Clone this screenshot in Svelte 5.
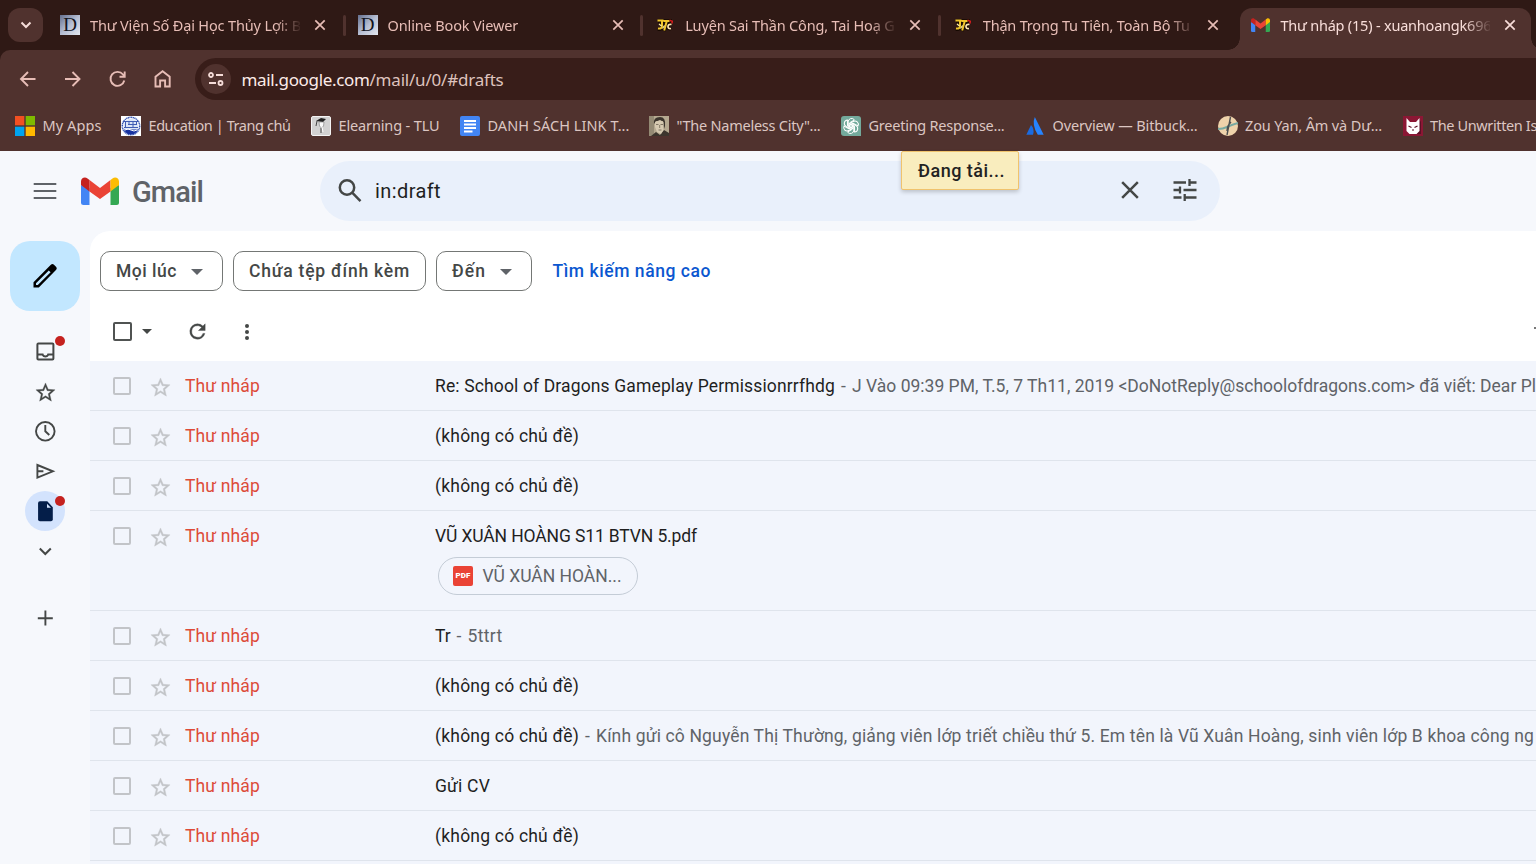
<script>
  // Spreads letter spacing so that a label takes exactly the given width.
  function fit(node, width) {
    if (!width) return;
    node.style.letterSpacing = '0px';
    const natural = node.getBoundingClientRect().width;
    const count = node.textContent.length;
    node.style.letterSpacing = (width - natural) / count + 'px';
  }

  const tabs = [
    { icon: 'd', title: 'Thư Viện Số Đại Học Thủy Lợi: B', w: 211 },
    { icon: 'd', title: 'Online Book Viewer', w: 130.5 },
    { icon: 'jtc', title: 'Luyện Sai Thần Công, Tai Hoạ G', w: 209.5 },
    { icon: 'jtc', title: 'Thận Trọng Tu Tiên, Toàn Bộ Tu', w: 207 },
    { icon: 'gmail', title: 'Thư nháp (15) - xuanhoangk696', w: 211, active: true }
  ];

  const bookmarks = [
    { icon: 'ms', label: 'My Apps', w: 59 },
    { icon: 'tlu', label: 'Education | Trang chủ', w: 142 },
    { icon: 'elearn', label: 'Elearning - TLU', w: 101 },
    { icon: 'docs', label: 'DANH SÁCH LINK T...', w: 142 },
    { icon: 'face', label: '"The Nameless City"...', w: 144 },
    { icon: 'gpt', label: 'Greeting Response...', w: 136 },
    { icon: 'atl', label: 'Overview — Bitbuck...', w: 145 },
    { icon: 'zou', label: 'Zou Yan, Âm và Dư...', w: 137 },
    { icon: 'cat', label: 'The Unwritten Is', w: 107 }
  ];

  const none = { subject: '(không có chủ đề)', w: 144 };
  const mails = [
    {
      subject: 'Re: School of Dragons Gameplay Permissionrrfhdg', w: 400,
      snippet: 'J Vào 09:39 PM, T.5, 7 Th11, 2019 <DoNotReply@schoolofdragons.com> đã viết: Dear Pl', sw: 684
    },
    none,
    none,
    { subject: 'VŨ XUÂN HOÀNG S11 BTVN 5.pdf', w: 262, file: 'VŨ XUÂN HOÀN...' },
    { subject: 'Tr', w: 15.5, snippet: '5ttrt', sw: 35 },
    none,
    {
      ...none,
      snippet: 'Kính gửi cô Nguyễn Thị Thường, giảng viên lớp triết chiều thứ 5. Em tên là Vũ Xuân Hoàng, sinh viên lớp B khoa công ng', sw: 938
    },
    { subject: 'Gửi CV', w: 55 },
    none
  ];

  const star = 'M22 9.24l-7.19-.62L12 2 9.19 8.63 2 9.24l5.46 4.73L5.82 21 12 17.27 18.18 21l-1.63-7.03L22 9.24zM12 15.4l-3.76 2.27 1-4.28-3.32-2.88 4.38-.38L12 6.1l1.71 4.04 4.38.38-3.32 2.88 1 4.28L12 15.4z';
  const refresh = 'M17.65 6.35A7.96 7.96 0 0 0 12 4a8 8 0 1 0 7.73 10h-2.08A6 6 0 1 1 12 6c1.66 0 3.14.69 4.22 1.78L13 11h7V4l-2.35 2.35z';
</script>

{#snippet gmailMark(w, h)}
  <svg width={w} height={h} viewBox="0 0 38 28">
    <path fill="#4285f4" d="M0 8v17.500Q0 28 2.500 28H8.500V11z" />
    <path fill="#34a853" d="M29.500 28h6Q38 28 38 25.500V8l-8.500 3z" />
    <path fill="#ea4335" d="M8.500 14.500V3L19 11 29.500 3v11.500L19 22z" />
    <path fill="#fbbc04" d="M29.500 14.500V3l2-1.600C34.200-.8 38 1 38 4.400V8z" />
    <path fill="#c5221f" d="M8.500 14.500V3l-2-1.600C3.800-.8 0 1 0 4.400V8z" />
  </svg>
{/snippet}

{#snippet close(size, stroke)}
  <svg width={size} height={size} viewBox="0 0 12 12"><path d="M1.300 1.300l9.400 9.400M10.700 1.300l-9.400 9.400" fill="none" stroke="currentColor" stroke-width={stroke} /></svg>
{/snippet}

{#snippet favicon(kind)}
  {#if kind === 'd'}
    <span class="fav-d">D</span>
  {:else if kind === 'jtc'}
    <svg width="16" height="14" viewBox="0 0 16 14" fill="none">
      <path d="M1 3h14M5 3v6q-1 3-4 2M10 3L7 13M14 6q-4 1-3 4l3 1" stroke="#160900" stroke-width="3.500" />
      <path d="M.5 2.500h6M5 3v5q0 3-4 2.500M6.500 3h6M9.800 3L7.200 12.500" stroke="#f0c52c" stroke-width="2" />
      <path d="M2 6l2.500 2M5.500 10.500l2-3" stroke="#fff3a8" stroke-width="1.200" />
      <path d="M14.500 6.500q-3.500-.5-3.500 2t3 2" stroke="#ffe6b4" stroke-width="1.700" />
      <path d="M12.500 2.200l2.800 1-.4 2.300" stroke="#d91d1d" stroke-width="1.500" />
    </svg>
  {:else if kind === 'gmail'}
    {@render gmailMark(19, 14)}
  {:else if kind === 'ms'}
    <svg width="20" height="20" viewBox="0 0 20 20"><path fill="#f25022" d="M0 0h9.300v9.300H0z" /><path fill="#7fba00" d="M10.700 0H20v9.300h-9.300z" /><path fill="#00a4ef" d="M0 10.700h9.300V20H0z" /><path fill="#ffb900" d="M10.700 10.700H20V20h-9.300z" /></svg>
  {:else if kind === 'tlu'}
    <svg width="20" height="20" viewBox="0 0 20 20" fill="none">
      <path fill="#fff" d="M0 0h20v20H0z" />
      <circle cx="10" cy="10" r="8.700" stroke="#3556b5" stroke-width="1.500" stroke-dasharray="1.200 .5" />
      <circle cx="10" cy="10" r="7.300" fill="#dbe5f7" />
      <path d="M3 13.500h14q-2 5-7 5t-7-5z" fill="#1732a0" />
      <path d="M2 5.500h15M3 11.500h14M4.500 6v5M7 8.500h8M8 6v3M12 6v5M15.500 6v3" stroke="#3f5cb4" />
      <path d="M4 14q3-2 6 0t6 0" stroke="#fff" />
    </svg>
  {:else if kind === 'elearn'}
    <svg width="20" height="20" viewBox="0 0 20 20" fill="none">
      <rect x=".5" y=".5" width="19" height="19" rx="1.500" fill="#d2d2d2" stroke="#f4f4f4" />
      <path d="M5 5l5-3 5 1-3 3z" fill="#222" />
      <path d="M8 6h5l-.5 4-2 2-2-2z" fill="#fafafa" stroke="#777" stroke-width=".6" />
      <path d="M6 5l-1 5M10 12v5" stroke="#444" />
      <path d="M11 11l1 5" stroke="#fff" />
    </svg>
  {:else if kind === 'docs'}
    <svg width="20" height="20" viewBox="0 0 20 20"><rect width="20" height="20" rx="2" fill="#4285f4" /><path d="M4 5h12M4 8.500h12M4 12h12M4 15.500h8.500" stroke="#fff" stroke-width="1.800" /></svg>
  {:else if kind === 'face'}
    <svg width="20" height="20" viewBox="0 0 20 20">
      <path fill="#b5a990" d="M0 0h20v20H0z" /><path fill="#948a74" d="M0 0h5v20H0z" />
      <path fill="#3c352d" d="M2 20l5-4 4 3 4-5 5 3v3zM5 8q-1-7 6-7 6 0 5 9l-1 3-1-8-7 0z" />
      <path fill="#d6cab1" d="M6 6l5-2 3.500 2v8l-2.500 4-4-2-2-5z" />
      <path d="M7 8.500h2.500M11.500 8.500H14M9.500 14h3M10.700 9v3" stroke="#6d6352" stroke-width=".8" />
    </svg>
  {:else if kind === 'gpt'}
    <svg width="20" height="20" viewBox="0 0 20 20" fill="none">
      <path d="M3 0h14q3 0 3 3v17H3q-3 0-3-3V3q0-3 3-3z" fill="#74aa9c" />
      <g stroke="#fff" stroke-width="1">
        {#each [0, 60, 120, 180, 240, 300] as a}
          <path transform="rotate({a} 10 10)" d="M7.200 11.600V5.900a3.400 3.400 0 0 1 6.200-2L8.800 6.700v5.200" />
        {/each}
      </g>
    </svg>
  {:else if kind === 'atl'}
    <svg width="20" height="20" viewBox="0 0 20 20"><path fill="#2684ff" d="M9.800 1L18.700 18.700h-5.900Q6.500 9 9.800 1z" /><path fill="#1b6be0" d="M6 9q4 4 2 9.700H1.300z" /></svg>
  {:else if kind === 'zou'}
    <svg width="20" height="20" viewBox="0 0 20 20" fill="none">
      <circle cx="10" cy="10" r="10" fill="#efd3ab" />
      <path d="M0 13q5 0 9-2t11-4" stroke="#79aaa1" stroke-width="2" />
      <path d="M12.500 1L9 19M13 6q-4 4-4 9" stroke="#4c4f50" stroke-width="1.400" />
    </svg>
  {:else if kind === 'cat'}
    <svg width="20" height="20" viewBox="0 0 20 20"><path fill="#8b1734" d="M0 0h20v20H0z" /><path fill="#5c0f26" d="M16 3l2 3v12H7l-3-3z" /><path fill="#fff" d="M3.500 2l3.500 4h6l3.500-4v13l-3 3h-7l-3-3z" /><path d="M5.500 10l3 1.500M14.500 10l-3 1.500M9 14h2" stroke="#5b0d22" stroke-width="1.200" /></svg>
  {/if}
{/snippet}

<div class="window">
  <header class="chrome">
    <div class="strip">
      <button class="search-tabs" aria-label="Tabs">
        <svg width="12" height="8" viewBox="0 0 12 8"><path d="M1.500 1.500L6 6l4.500-4.500" fill="none" stroke="currentColor" stroke-width="2" /></svg>
      </button>
      <div class="tabs">
        {#each tabs as t, i}
          <div class="tab" class:active={t.active}>
            <span class="fav">{@render favicon(t.icon)}</span>
            <span class="title"><span use:fit={t.w}>{t.title}</span></span>
            <span class="x">{@render close(12, 1.7)}</span>
            {#if i < 3}<i class="sep"></i>{/if}
          </div>
        {/each}
      </div>
    </div>

    <div class="toolbar">
      <div class="nav">
        <svg width="20" height="20" viewBox="0 0 20 20"><path d="M17.500 10H3.500M10 3L3 10l7 7" /></svg>
        <svg width="20" height="20" viewBox="0 0 20 20"><path d="M2 10h14M9.500 3l7 7-7 7" /></svg>
        <svg width="20" height="20" viewBox="0 0 20 20"><path d="M16.300 11.500A7 7 0 1 1 15 5.500L16.500 7.500M16.700 2.500v5.200H11.500" /></svg>
        <svg width="20" height="20" viewBox="0 0 20 20"><path d="M2.500 17.500V7.800L9.600 2.200l7.100 5.600v9.700h-4.600v-6H7.100v6z" /></svg>
      </div>
      <div class="omnibox">
        <span class="site">
          <svg width="18" height="14" viewBox="0 0 18 14" fill="none" stroke="currentColor" stroke-width="1.800"><circle cx="4" cy="3" r="2" /><path d="M9 3h7M2 11h7" /><circle cx="13.500" cy="11" r="2" /></svg>
        </span>
        <span class="url"><b use:fit={128}>mail.google.com</b><span use:fit={134}>/mail/u/0/#drafts</span></span>
      </div>
    </div>

    <nav class="bookmarks">
      {#each bookmarks as b}
        <div class="bookmark">
          <span class="fav">{@render favicon(b.icon)}</span>
          <span class="blabel"><span use:fit={b.w}>{b.label}</span></span>
        </div>
      {/each}
    </nav>
  </header>

  <div class="gmail">
    <div class="top">
      <svg class="burger" width="24" height="18" viewBox="0 0 24 18"><path d="M.7 2h22.600M.7 9h22.600M.7 16h22.600" stroke="#5f6368" stroke-width="2.200" /></svg>
      {@render gmailMark(38, 28)}
      <span class="brand"><span use:fit={71}>Gmail</span></span>
      <div class="search">
        <svg width="24" height="24" viewBox="0 0 24 24" fill="none" stroke="currentColor" stroke-width="2.500"><circle cx="9" cy="8.500" r="7.200" /><path d="M14.200 13.700l8.300 8.500" /></svg>
        <span class="query"><span use:fit={66}>in:draft</span></span>
        <span class="clear">{@render close(20, 1.5)}</span>
        <svg class="tune" width="26" height="26" viewBox="0 0 26 26" fill="none" stroke="currentColor" stroke-width="2.300"><path d="M1.500 5.500H14M17.500 5.500H24.500M17.500 2v7M1.500 13h6M8 9.500v7M11.500 13h13M1.500 20.500h8M12.700 17v7M12.700 20.500h11.800" /></svg>
      </div>
      <div class="toast"><span use:fit={87}>Đang tải...</span></div>
    </div>

    <div class="body">
      <aside>
        <button class="compose" aria-label="Compose">
          <svg width="26" height="26" viewBox="0 0 26 26"><path fill="#000" fill-rule="evenodd" d="M1.500 19.200L17.600 3.100l1.500-1.500q1.300-1 2.600 0l2.500 2.500q1.200 1.300 0 2.600L6.800 24.500H1.500zM4 20.200V22h1.800L18.600 9.200l-1.800-1.800z" /></svg>
        </button>
        <div class="side">
          <span class="slot"><svg width="24" height="24" viewBox="-.4 -.4 24 24"><path fill="currentColor" d="M19 3H5a2 2 0 0 0-2 2v14c0 1.100.9 2 2 2h14a2 2 0 0 0 2-2V5a2 2 0 0 0-2-2zm0 16H5v-3h3.560c.69 1.190 1.970 2 3.450 2s2.750-.81 3.450-2H19v3zm0-5h-4.990c0 1.100-.9 2-2 2s-2-.9-2-2H5V5h14v9z" /></svg><i class="dot"></i></span>
          <span class="slot"><svg class="nudge" width="23" height="23" viewBox="0 0 24 24"><path fill="currentColor" stroke="currentColor" stroke-width=".3" d={star} /></svg></span>
          <span class="slot"><svg width="24" height="24" viewBox="0 0 24 24" fill="none" stroke="currentColor" stroke-width="1.900"><circle cx="12.300" cy="12.300" r="9.300" /><path d="M12.300 6v6.300l4 3.700" /></svg></span>
          <span class="slot"><svg width="24" height="24" viewBox="0 0 24 24" fill="none" stroke="currentColor" stroke-width="1.900"><path d="M4.400 6l15.500 6.300-15.500 6.300zM4.400 12.300h6" /></svg></span>
          <span class="slot current"><svg width="24" height="24" viewBox="0 0 24 24"><path fill="#041e49" d="M6 2h8l6 6v12q0 2-2 2H6q-2 0-2-2V4q0-2 2-2z" transform="translate(1.400 .3) scale(.92 1)" /><path fill="#d3e3fd" d="M14 4.800V8.800h4z" /></svg><i class="dot"></i></span>
          <span class="slot"><svg width="14" height="9" viewBox="0 0 14 9"><path d="M1.800 1.500L7.300 7l5.500-5.500" fill="none" stroke="currentColor" stroke-width="2" /></svg></span>
          <span class="slot plus"><svg width="16" height="16" viewBox="0 0 16 16"><path d="M8.400 .5v15M.8 8.300h15" stroke="currentColor" stroke-width="1.900" /></svg></span>
        </div>
      </aside>

      <main>
        <div class="chips">
          <span class="chip"><span use:fit={61}>Mọi lúc</span><i class="caret"></i></span>
          <span class="chip"><span use:fit={161}>Chứa tệp đính kèm</span></span>
          <span class="chip"><span use:fit={34}>Đến</span><i class="caret"></i></span>
          <span class="advanced"><span use:fit={158.5}>Tìm kiếm nâng cao</span></span>
        </div>
        <div class="actions">
          <i class="check dark"></i>
          <i class="caret small"></i>
          <svg class="reload" width="23" height="23" viewBox="0 0 24 24"><path fill="currentColor" stroke="currentColor" stroke-width=".4" d={refresh} /></svg>
          <svg class="more" width="6" height="18" viewBox="0 0 6 18"><g fill="currentColor"><circle cx="3" cy="3" r="2" /><circle cx="3" cy="9" r="2" /><circle cx="3" cy="15" r="2" /></g></svg>
          <i class="page-arrow"></i>
        </div>
        <div class="rows">
          {#each mails as m}
            <div class="row" class:tall={m.file}>
              <i class="check"></i>
              <svg class="star" width="23" height="23" viewBox="0 0 24 24"><path fill="currentColor" stroke="currentColor" stroke-width=".4" d={star} /></svg>
              <span class="from"><span use:fit={75}>Thư nháp</span></span>
              <div class="content">
                <div class="line">
                  <span class="subject" use:fit={m.w}>{m.subject}</span>
                  {#if m.snippet}
                    <span class="dash">-</span>
                    <span class="snippet" use:fit={m.sw}>{m.snippet}</span>
                  {/if}
                </div>
                {#if m.file}
                  <div class="file"><span class="pdf">PDF</span><span use:fit={139}>{m.file}</span></div>
                {/if}
              </div>
            </div>
          {/each}
          <div class="row"></div>
        </div>
      </main>
    </div>
  </div>
</div>

<style>
  :global(body) { margin: 0; overflow: hidden; }
  * { box-sizing: border-box; }
  svg { display: block; flex: none; }
  i { display: block; flex: none; }
  button { border: 0; padding: 0; display: flex; align-items: center; justify-content: center; flex: none; }
  span, b { white-space: pre; }
  .window { width: 1536px; height: 864px; overflow: hidden; display: flex; flex-direction: column; background: #f6f8fc; }

  .chrome { height: 151px; flex: none; background: #2f1915; color: #e7bdb6; font-family: "Noto Sans", "Open Sans", sans-serif; }
  .strip { height: 50px; display: flex; padding-left: 8px; }
  .search-tabs { width: 35px; height: 34px; margin-top: 8px; border-radius: 12px; background: #50322e; color: #f5dcd8; }
  .tabs { display: flex; margin-left: 4px; padding-top: 8px; }
  .tab { width: 297.6px; height: 42px; flex: none; position: relative; display: flex; align-items: center; padding: 0 0 8px 13px; }
  .tab .fav { width: 20px; height: 20px; margin-right: 10px; display: flex; align-items: center; justify-content: center; }
  .title { width: 210px; overflow: hidden; font-size: 14.500px; line-height: 22px; margin-right: 14px; mask-image: linear-gradient(90deg, #000 185px, transparent 212px); }
  .title > span, .url > *, .blabel > span { display: inline-block; }
  .sep { position: absolute; right: -1px; top: 7px; width: 3px; height: 21px; border-radius: 1.500px; background: #50322e; }
  .tab.active { color: #f8ddd9; }
  .tab.active::before { content: ""; position: absolute; z-index: 0; left: 2.500px; top: 0; width: 291px; height: 42px; border-radius: 12px 12px 0 0; background: #50322e; }
  .tab.active::after { content: ""; position: absolute; left: -9.500px; width: 315px; top: 30px; height: 12px; background: radial-gradient(circle at 0 0, transparent 11.500px, #50322e 12px) 0 0 / 12px 12px no-repeat, radial-gradient(circle at 12px 0, transparent 11.500px, #50322e 12px) 303px 0 / 12px 12px no-repeat; }
  .tab.active > span { position: relative; z-index: 1; }
  .fav-d { width: 20px; height: 20px; background: linear-gradient(135deg, #65708f, #b5bdd2 50%, #e5e8f0); color: #11131c; font: 19px/20px "Liberation Serif", serif; text-align: center; }

  .toolbar { height: 50px; background: #50322e; border-top-left-radius: 10px; display: flex; padding: 8px 0 0 18px; }
  .nav { display: flex; gap: 25px; padding-top: 11px; width: 177px; flex: none; }
  .nav path { fill: none; stroke: #e7bdb6; stroke-width: 1.900; }
  .omnibox { flex: 1; height: 42px; border-radius: 21px 0 0 21px; background: #381d19; display: flex; align-items: center; padding-left: 6px; }
  .site { width: 30px; height: 30px; border-radius: 50%; background: #50322e; color: #f5dcd8; display: flex; align-items: center; justify-content: center; margin-right: 10.500px; }
  .url { font-size: 17px; color: #dfc3be; }
  .url b { font-weight: 400; color: #fcebe8; }
  .bookmarks { height: 51px; background: #50322e; display: grid; grid-template-columns: 106px 190px 149px 189px 192px 184px 192.500px 185px 133px; padding-left: 15px; align-items: center; color: #dcc6c2; }
  .bookmark { display: flex; align-items: center; }
  .bookmark .fav { width: 20px; margin-right: 7.500px; }
  .blabel { font-size: 14.500px; line-height: 20px; height: 22px; }

  .gmail { flex: 1; display: flex; flex-direction: column; min-height: 0; font-family: Roboto, sans-serif; color: #444746; }
  .top { height: 80px; flex: none; display: flex; align-items: center; padding-left: 33px; position: relative; }
  .burger { margin-right: 24px; }
  .brand { font-size: 29px; font-weight: 500; color: #5f6368; width: 188px; margin-left: 13px; flex: none; line-height: 36px; padding-top: 1px; }
  .brand > span, .query > span, .toast > span, .chip > span, .advanced > span, .from > span, .subject, .snippet, .file > span { display: inline-block; }
  .search { width: 900px; height: 60px; border-radius: 30px; background: #e9f0fb; display: flex; align-items: center; padding-left: 18px; }
  .search svg { flex: none; }
  .tune { margin-top: -2px; }
  .query { font-size: 20px; color: #1f1f1f; width: 745px; margin-left: 13px; }
  .clear { margin: -2px 32px 0 0; }
  .toast { position: absolute; left: 901px; top: 0; width: 118px; height: 39px; padding-left: 16px; border: 1px solid #f0c36d; border-radius: 2px; background: #f9edbe; box-shadow: 0 2px 4px rgba(0, 0, 0, .2); color: #222; font-weight: 500; font-size: 18px; line-height: 38px; }

  .body { flex: 1; display: flex; min-height: 0; }
  aside { width: 90px; flex: none; padding: 10px 10px 0; }
  .compose { width: 70px; height: 70px; border-radius: 20px; background: #c2e7ff; }
  .side { display: flex; flex-direction: column; align-items: center; padding-top: 20px; color: #444746; }
  .slot { width: 40px; height: 40px; border-radius: 50%; display: flex; align-items: center; justify-content: center; position: relative; }
  .nudge { margin-top: 2px; }
  .current { background: #d3e3fd; }
  .dot { position: absolute; width: 10px; height: 10px; right: 0; top: 5px; border-radius: 50%; background: #c5221f; }
  .plus { margin-top: 27px; }

  main { flex: 1; min-width: 0; background: #fff; border-top-left-radius: 20px; overflow: hidden; }
  .chips { display: flex; gap: 10px; padding: 20px 0 0 10px; font-size: 17.500px; font-weight: 500; }
  .chip { height: 40px; border: 1px solid #747775; border-radius: 10px; padding: 0 15px; display: flex; align-items: center; }
  .chip .caret { margin: 1px 4px 0 14px; }
  .caret { width: 0; height: 0; border: 6.500px solid transparent; border-top-color: #5f6368; border-bottom: 0; }
  .advanced { color: #0b57d0; line-height: 40px; padding-left: 10.500px; }
  .actions { height: 70px; display: flex; align-items: center; padding: 11px 0 0 23px; }
  .check { width: 18px; height: 18px; border: 2px solid #c2c4c8; border-radius: 2px; }
  .check.dark { border-color: #505352; width: 19px; height: 19px; }
  .caret.small { border-width: 5px 5px 0; margin-left: 10px; border-top-color: #444746; }
  .reload { margin-left: 34px; }
  .more { margin-left: 35px; }
  .page-arrow { margin: -7px 0 0 auto; width: 2px; height: 2px; background: #777; }

  .row { height: 50px; background: #f2f5fc; border-bottom: 1px solid #dfe4ec; display: flex; padding-left: 23px; font-size: 17.500px; }
  .row.tall { height: 100px; }
  .row .check { margin-top: 16px; }
  .star { color: #c2c4c8; margin: 15px 0 0 18px; }
  .from { width: 250px; margin-left: 13px; color: #dd4b39; line-height: 51px; height: 49px; flex: none; }
  .content { min-width: 0; flex: 1; }
  .line { display: flex; height: 49px; line-height: 51px; gap: 5px; }
  .line span { flex: none; }
  .dash { width: 7px; text-align: center; color: #5f6368; }
  .subject { color: #1f1f1f; }
  .snippet { color: #5f6368; }
  .file { margin: -3px 0 0 3px; width: 200px; height: 38px; border: 1px solid #c4ccd6; border-radius: 19px; display: flex; align-items: center; padding-left: 14px; color: #5f6368; }
  .pdf { width: 20px; height: 20px; border-radius: 2px; background: #ea4335; color: #fff; font: 900 8px/20px Roboto, sans-serif; text-align: center; margin-right: 9.500px; }
</style>
